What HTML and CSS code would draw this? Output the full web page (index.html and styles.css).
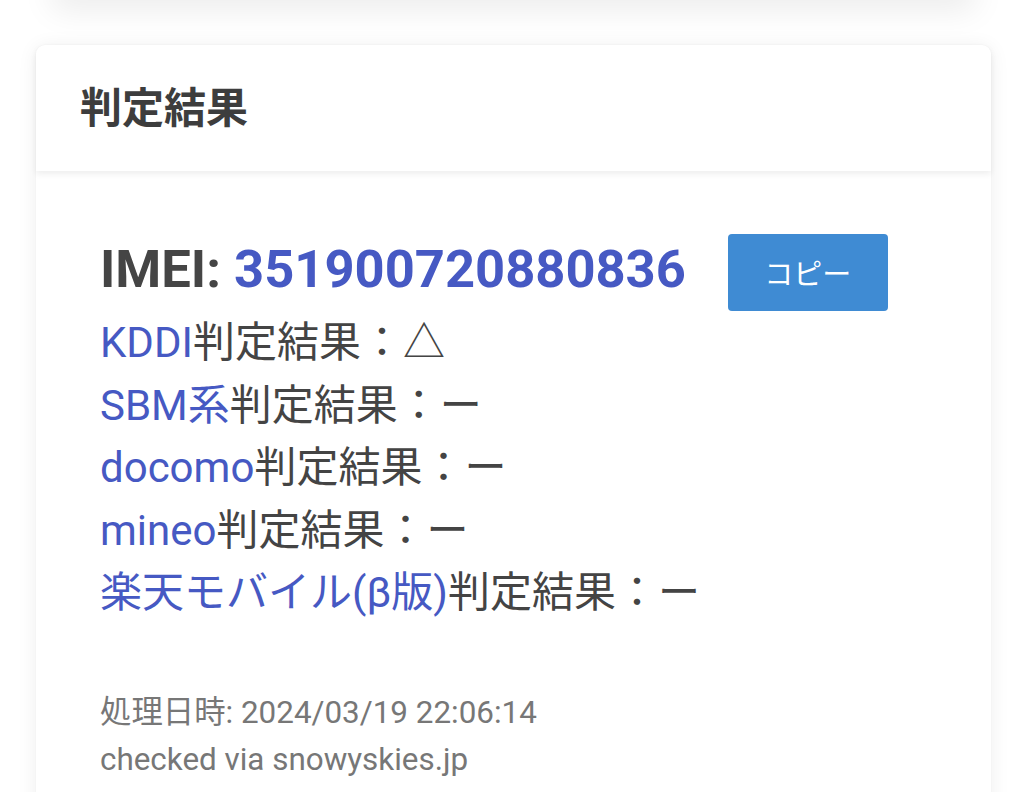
FILE: index.html
```html
<!DOCTYPE html>
<html lang="ja">
<head>
<meta charset="utf-8">
<link rel="stylesheet" href="styles.css">
</head>
<body>
<div class="prev-card"></div>
<div class="card">
  <div class="card-header">
    <h2 class="title">判定結果</h2>
  </div>
  <div class="card-body">
    <div class="imei-row">
      <div class="imei">IMEI: <span class="imei-num">351900720880836</span></div>
      <button class="copy-btn">コピー</button>
    </div>
    <div class="results">
      <div class="row"><span class="carrier">KDDI</span>判定結果：△</div>
      <div class="row"><span class="carrier">SBM系</span>判定結果：ー</div>
      <div class="row"><span class="carrier">docomo</span>判定結果：ー</div>
      <div class="row"><span class="carrier">mineo</span>判定結果：ー</div>
      <div class="row"><span class="carrier">楽天モバイル(β版)</span>判定結果：ー</div>
    </div>
    <div class="meta">
      <div class="meta-line">処理日時: 2024/03/19 22:06:14</div>
      <div class="meta-line">checked via snowyskies.jp</div>
    </div>
  </div>
</div>
</body>
</html>
```

FILE: styles.css
```css
html, body {
  margin: 0;
  padding: 0;
  background: #ffffff;
  overflow: hidden;
}
body {
  font-family: Roboto, "Noto Sans CJK JP", sans-serif;
  color: #444444;
  padding: 0 42px 0 36px;
}
.prev-card {
  height: 40px;
  margin-top: -40px;
  margin-left: 16px;
  margin-right: 16px;
  background: #fff;
  box-shadow: 0 10px 32px rgba(0, 0, 0, 0.08);
}
.card {
  margin-top: 45px;
  background: #fff;
  border-radius: 9px;
  box-shadow: 0 2px 20px rgba(0, 0, 0, 0.07), 0 0 2px rgba(0, 0, 0, 0.04);
  height: 900px;
}
.card-header {
  height: 126px;
  box-sizing: border-box;
  display: flex;
  align-items: center;
  padding-left: 44px;
  padding-bottom: 8px;
  border-radius: 9px 9px 0 0;
  box-shadow: 0 3px 6px rgba(0, 0, 0, 0.07);
  position: relative;
}
.title {
  margin: 0;
  font-size: 42px;
  font-weight: 700;
  color: #3d3d3d;
}
.card-body {
  padding: 62px 64px 0 64px;
}
.imei-row {
  display: flex;
  align-items: center;
  gap: 42px;
  height: 72px;
}
.imei {
  font-size: 52.5px;
  font-weight: 700;
  color: #454545;
  line-height: 72px;
}
.imei-num {
  color: #4659c3;
}
.copy-btn {
  flex-shrink: 0;
  width: 160px;
  height: 77px;
  border: none;
  border-radius: 4px;
  background: #3f8bd3;
  color: #fff;
  font-family: Roboto, "Noto Sans CJK JP", sans-serif;
  font-size: 29px;
  margin-top: 6px;
}
.results {
  margin-top: 7px;
  font-size: 42px;
  line-height: 62.5px;
  color: #444;
}
.carrier {
  color: #4659c3;
}
.meta {
  margin-top: 64px;
  font-size: 31.4px;
  line-height: 47px;
  color: #777;
}
```
